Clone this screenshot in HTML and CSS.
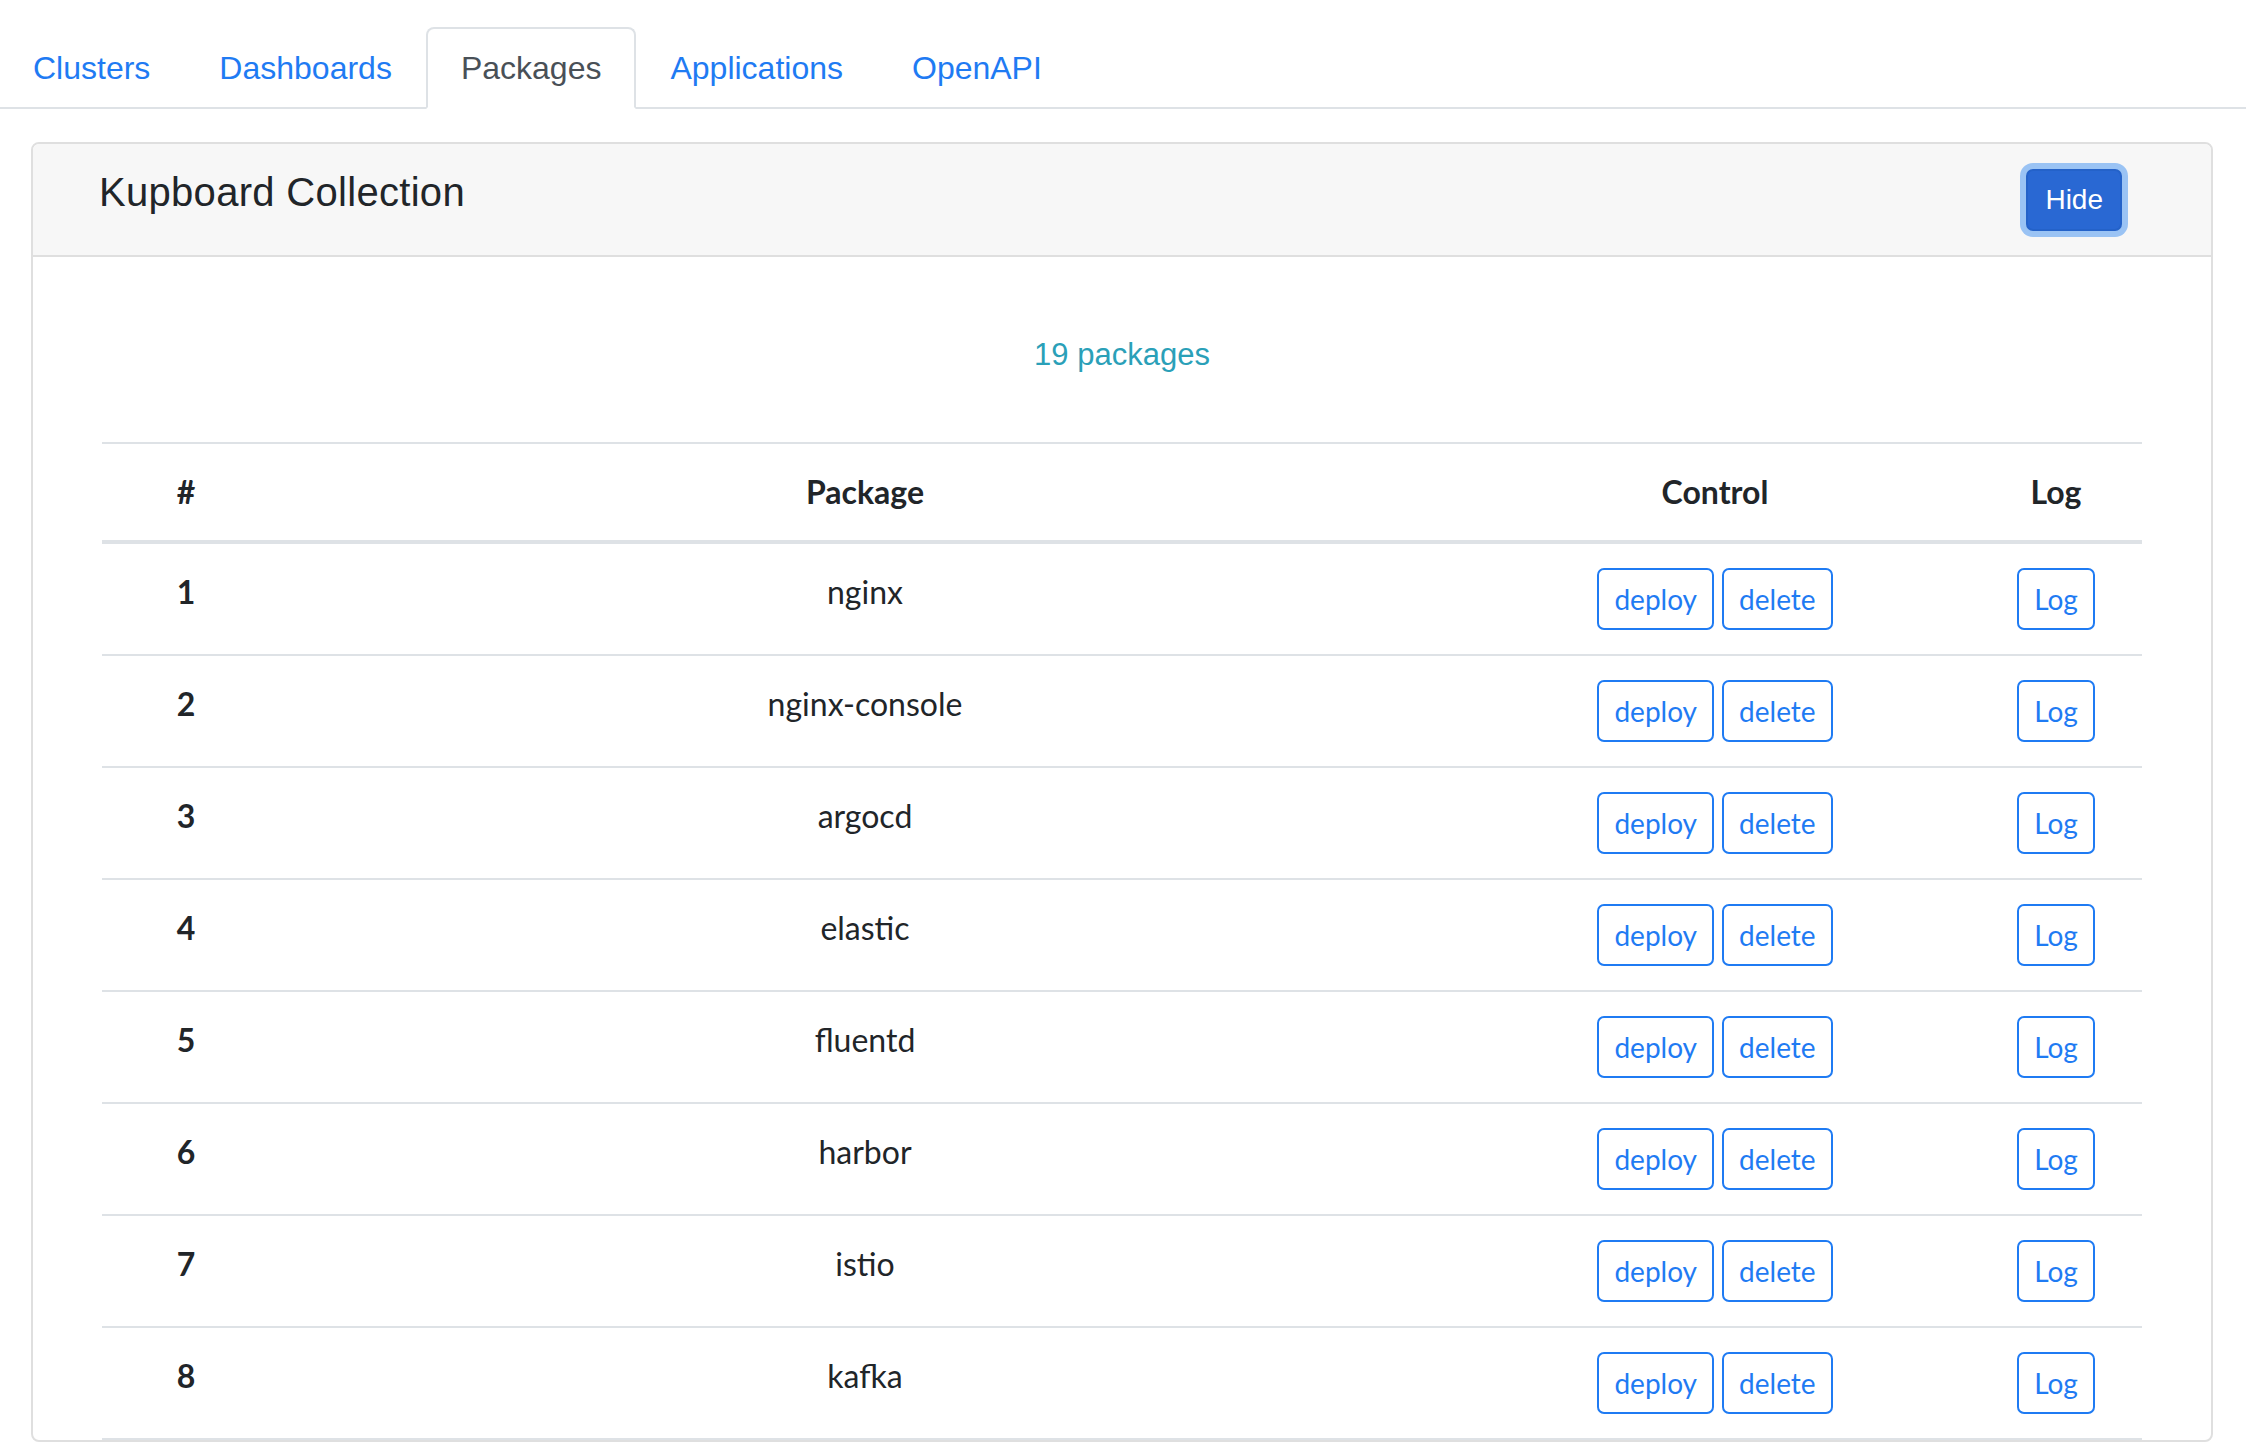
FILE: index.html
```html
<!DOCTYPE html>
<html lang="en">
<head>
<meta charset="utf-8">
<title>Kupboard - Packages</title>
<link rel="stylesheet" href="styles.css">
</head>
<body>
<ul class="nav-tabs">
  <li><a class="nav-link" href="#">Clusters</a></li>
  <li><a class="nav-link" href="#">Dashboards</a></li>
  <li><a class="nav-link active" href="#">Packages</a></li>
  <li><a class="nav-link" href="#">Applications</a></li>
  <li><a class="nav-link" href="#">OpenAPI</a></li>
</ul>
<main class="page">
  <section class="card">
    <header class="card-header">
      <h4 class="card-title">Kupboard Collection</h4>
      <button class="btn-hide" type="button">Hide</button>
    </header>
    <div class="card-body">
      <p class="count">19 packages</p>
      <table class="pkg-table">
        <colgroup>
          <col class="c-num"><col class="c-pkg"><col class="c-ctl"><col class="c-log">
        </colgroup>
        <thead>
          <tr><th>#</th><th>Package</th><th>Control</th><th>Log</th></tr>
        </thead>
        <tbody>
          <tr><td class="num">1</td><td>nginx</td><td><div class="actions"><button class="btn-o">deploy</button><button class="btn-o">delete</button></div></td><td><div class="actions"><button class="btn-o">Log</button></div></td></tr>
          <tr><td class="num">2</td><td>nginx-console</td><td><div class="actions"><button class="btn-o">deploy</button><button class="btn-o">delete</button></div></td><td><div class="actions"><button class="btn-o">Log</button></div></td></tr>
          <tr><td class="num">3</td><td>argocd</td><td><div class="actions"><button class="btn-o">deploy</button><button class="btn-o">delete</button></div></td><td><div class="actions"><button class="btn-o">Log</button></div></td></tr>
          <tr><td class="num">4</td><td>elastic</td><td><div class="actions"><button class="btn-o">deploy</button><button class="btn-o">delete</button></div></td><td><div class="actions"><button class="btn-o">Log</button></div></td></tr>
          <tr><td class="num">5</td><td>fluentd</td><td><div class="actions"><button class="btn-o">deploy</button><button class="btn-o">delete</button></div></td><td><div class="actions"><button class="btn-o">Log</button></div></td></tr>
          <tr><td class="num">6</td><td>harbor</td><td><div class="actions"><button class="btn-o">deploy</button><button class="btn-o">delete</button></div></td><td><div class="actions"><button class="btn-o">Log</button></div></td></tr>
          <tr><td class="num">7</td><td>istio</td><td><div class="actions"><button class="btn-o">deploy</button><button class="btn-o">delete</button></div></td><td><div class="actions"><button class="btn-o">Log</button></div></td></tr>
          <tr><td class="num">8</td><td>kafka</td><td><div class="actions"><button class="btn-o">deploy</button><button class="btn-o">delete</button></div></td><td><div class="actions"><button class="btn-o">Log</button></div></td></tr>
        </tbody>
      </table>
    </div>
  </section>
</main>
</body>
</html>
```

FILE: styles.css
```css
html, body {
  margin: 0;
  padding: 0;
  background: #fff;
}

body {
  font-family: "Liberation Sans", Arial, sans-serif;
  color: #212529;
}

.nav-tabs {
  display: flex;
  list-style: none;
  margin: 27px 10px 0 0;
  padding: 0;
  border-bottom: 2px solid #dee2e6;
}

.nav-link {
  display: block;
  margin-bottom: -2px;
  padding: 15px 32.5px;
  border: 2px solid transparent;
  border-radius: 8px 8px 0 0;
  font-size: 32px;
  line-height: 48px;
  color: #1f7bf3;
  text-decoration: none;
}

.nav-tabs li:first-child .nav-link {
  padding-left: 31px;
}

.nav-link.active {
  color: #495057;
  background: #fff;
  border-color: #dee2e6 #dee2e6 #fff;
}

.page {
  padding: 33px 43px 0 31px;
}

.card {
  border: 2px solid #dfdfdf;
  border-radius: 8px;
  background: #fff;
}

.card-header {
  display: flex;
  align-items: center;
  justify-content: space-between;
  height: 111px;
  padding: 0 89px 0 66px;
  background: #f7f7f7;
  border-bottom: 2px solid #dfdfdf;
  border-radius: 6px 6px 0 0;
}

.card-title {
  margin: 0 0 16px;
  font-size: 40px;
  line-height: 48px;
  font-weight: 400;
  letter-spacing: 0.3px;
  color: #212529;
}

.btn-hide {
  font-family: "Liberation Sans", Arial, sans-serif;
  font-size: 28px;
  line-height: 42px;
  padding: 8px 17px;
  color: #fff;
  background: #2968d3;
  border: 2px solid #2462c9;
  border-radius: 7px;
  box-shadow: 0 0 0 6px #9ac3f4;
  cursor: pointer;
}

.card-body {
  padding: 75px 69px 0;
}

.count {
  margin: 0 0 64px;
  text-align: center;
  font-size: 31px;
  line-height: 46px;
  color: #2aa0b8;
}

.pkg-table {
  width: 100%;
  border-collapse: collapse;
  table-layout: fixed;
  font-family: Lato, "Liberation Sans", sans-serif;
  font-size: 32px;
  line-height: 48px;
  color: #212529;
}

.c-num { width: 168px; }
.c-pkg { width: 1190px; }
.c-ctl { width: 510px; }
.c-log { width: 172px; }

.pkg-table th {
  padding: 24px;
  border-top: 2px solid #dee2e6;
  border-bottom: 4px solid #dee2e6;
  font-weight: 700;
  text-align: center;
  vertical-align: bottom;
}

.pkg-table td {
  padding: 24px;
  border-top: 2px solid #dee2e6;
  border-bottom: 2px solid #dee2e6;
  text-align: center;
  vertical-align: top;
}

.pkg-table td.num {
  font-weight: 700;
}

.actions {
  display: flex;
  justify-content: center;
  gap: 8px;
}

.btn-o {
  font-family: Lato, "Liberation Sans", sans-serif;
  font-size: 28px;
  line-height: 42px;
  padding: 8px 15px;
  color: #1f7bf3;
  background: #fff;
  border: 2px solid #1f7bf3;
  border-radius: 7px;
  cursor: pointer;
}
```
